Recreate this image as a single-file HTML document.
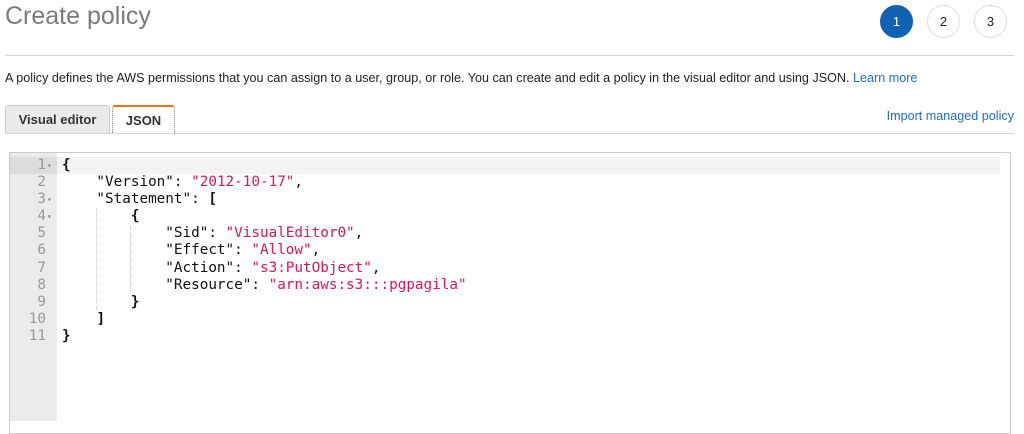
<!DOCTYPE html>
<html><head><style>
body{margin:0;width:1024px;height:421px;overflow:hidden;background:#fff;font-family:"Liberation Sans",sans-serif;position:relative}
.a{position:absolute}
.t{left:5px;top:0px;font-size:25px;color:#7b7b7b;line-height:32px}
.c{width:31px;height:31px;border-radius:50%;border:1px solid #ddd;text-align:center;line-height:31px;font-size:13px;color:#222;top:5px}
.hr{height:1px;background:#d5d5d5}
.tab{top:105px;height:27px;border:1px solid #ccc;border-bottom:none;border-radius:3px 3px 0 0;font-weight:bold;font-size:13px;line-height:27px;text-align:center;color:#333}
.ed{left:9px;top:152px;width:1000px;height:280px;border:1px solid #ccc;background:#fff}
.g{left:10px;top:153px;width:47px;height:268px;background:#ebebeb}
.code{font-family:"DejaVu Sans Mono",monospace;font-size:14.3px;line-height:17.1px;white-space:pre}
.ln{color:#999;text-align:right}
.s{color:#d2195a}
b{font-weight:bold}
</style></head><body>
<div class="a t">Create policy</div>
<div class="a c" style="left:880px;background:#1262b3;border-color:#1262b3;color:#fff">1</div>
<div class="a c" style="left:927px">2</div>
<div class="a c" style="left:974px">3</div>
<div class="a hr" style="left:5px;top:55px;width:1009px"></div>
<div class="a" style="left:5px;top:70px;font-size:12.6px;color:#222;line-height:16px">A policy defines the AWS permissions that you can assign to a user, group, or role. You can create and edit a policy in the visual editor and using JSON. <span style="color:#1f6fbf">Learn more</span></div>
<div class="a tab" style="left:5px;width:103px;background:#eaeaea">Visual editor</div>
<div class="a tab" style="left:112px;width:61px;background:#fff;border:1px dotted #888;border-top:2px solid #e07a10;border-bottom:none;height:26px">JSON</div>
<div class="a" style="right:10px;top:109px;font-size:12.6px;color:#1f6fbf">Import managed policy</div>
<div class="a hr" style="left:5px;top:133px;width:1009px"></div>
<div class="a ed"></div>
<div class="a g"></div>
<div class="a" style="left:10px;top:157px;width:47px;height:17px;background:#dcdcdc"></div>
<div class="a" style="left:57px;top:157px;width:943px;height:17px;background:#f3f3f3"></div>
<div class="a" style="left:96px;top:208px;width:0;height:102px;border-left:1px dotted #ccc"></div>
<div class="a" style="left:130px;top:225px;width:0;height:68px;border-left:1px dotted #ccc"></div>
<div class="a code ln" style="left:10px;top:157px;width:36px">1
2
3
4
5
6
7
8
9
10
11</div>
<div class="a code" style="left:47px;top:157px;color:#888;font-size:8px;line-height:17.1px">▾

▾
▾</div>
<div class="a code" style="left:62px;top:157px;color:#111"><b>{</b>
    "Version": <span class="s">"2012-10-17"</span>,
    "Statement": <b>[</b>
        <b>{</b>
            "Sid": <span class="s">"VisualEditor0"</span>,
            "Effect": <span class="s">"Allow"</span>,
            "Action": <span class="s">"s3:PutObject"</span>,
            "Resource": <span class="s">"arn:aws:s3:::pgpagila"</span>
        <b>}</b>
    <b>]</b>
<b>}</b></div>
</body></html>
